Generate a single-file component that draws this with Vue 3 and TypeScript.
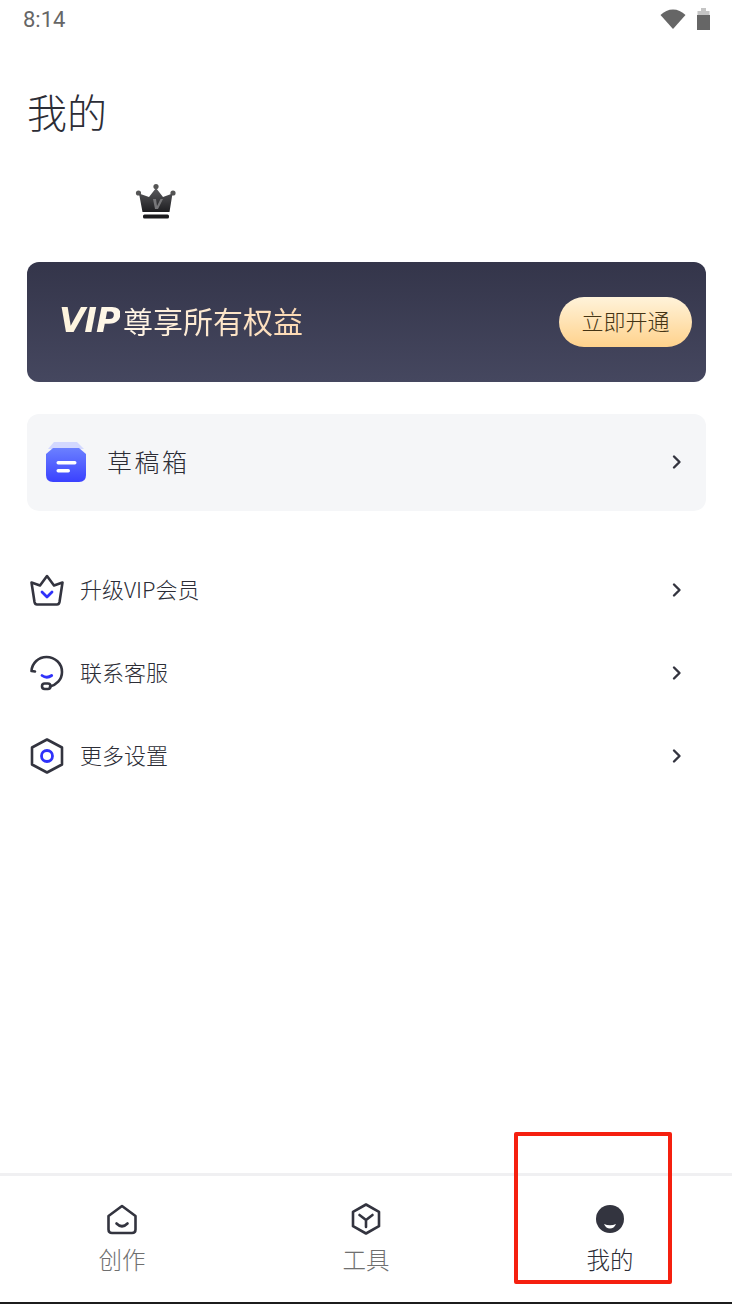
<script setup lang="ts">
const menus = [
  { key: 'vip', label: '升级VIP会员' },
  { key: 'service', label: '联系客服' },
  { key: 'setting', label: '更多设置' },
]
</script>

<template>
  <div class="page">
    <div class="status-bar">
      <span class="time">8:14</span>
      <div class="status-icons">
        <svg width="26" height="20" viewBox="0 0 26 20">
          <path d="M0.5 6C7.5 -1.5 18.5 -1.5 25.5 6L13 20Z" fill="#666" />
        </svg>
        <svg width="13" height="22" viewBox="0 0 13 22">
          <path d="M0 7h13v15H0z" fill="#666" />
          <path d="M4 0h5v3h3.500v4H.5V3h3.500z" fill="#c4c4c4" />
        </svg>
      </div>
    </div>

    <h1 class="title">我的</h1>

    <div class="user">
      <svg width="42" height="38" viewBox="0 0 42 38">
        <defs>
          <linearGradient id="crownFill" x1="0" y1="0" x2="0" y2="1">
            <stop offset="0" stop-color="#5c5c5f" />
            <stop offset="1" stop-color="#1d1d20" />
          </linearGradient>
        </defs>
        <circle cx="21" cy="3.500" r="2.600" fill="#555" />
        <circle cx="3.500" cy="10" r="2.600" fill="#555" />
        <circle cx="38" cy="10" r="2.600" fill="#555" />
        <path d="M21 5L28 14L37.500 10.500L34.500 29H7.500L4 10.500L14 14Z" fill="url(#crownFill)" />
        <path d="M18 16h3l1 7 3.500-7h2.500l-5 10h-3z" fill="#77777a" />
        <rect x="8" y="31.500" width="26" height="4" rx="1.500" fill="#1b1b1e" />
      </svg>
    </div>

    <div class="banner">
      <div class="banner-text">
        <span class="vip-logo">VIP</span>
        <span class="banner-title">尊享所有权益</span>
      </div>
      <div class="open-btn">立即开通</div>
    </div>

    <div class="draft">
      <svg width="40" height="40" viewBox="0 0 40 40">
        <defs>
          <linearGradient id="boxFill" x1="0" y1="0" x2="0" y2="1">
            <stop offset="0" stop-color="#6b80ff" />
            <stop offset="1" stop-color="#3a41ff" />
          </linearGradient>
        </defs>
        <path d="M8 0H31L38 7H2Z" fill="#d3d8ff" />
        <path d="M7 6H33L40 12V33Q40 40 33 40H7Q0 40 0 33V12Z" fill="url(#boxFill)" />
        <rect x="10.500" y="19" width="20" height="3.500" rx="1.700" fill="#fff" />
        <rect x="10.500" y="27" width="13.500" height="3.500" rx="1.700" fill="#fff" />
      </svg>
      <span class="draft-label">草稿箱</span>
      <svg class="chevron" width="12" height="16" viewBox="0 0 12 16">
        <path d="M3 2.500L8.500 8L3 13.500" />
      </svg>
    </div>

    <div class="menu">
      <div v-for="item in menus" :key="item.key" class="menu-row">
        <svg width="36" height="36" viewBox="0 0 36 36">
          <template v-if="item.key === 'vip'">
            <path class="ink" d="M18 4L25 13.500L33.500 10.500L30.500 30Q30 32.500 28 32.500H8Q6 32.500 5.500 30L2.500 10.500L11 13.500Z" />
            <path class="blue" d="M13 20L18 25L23 20" />
          </template>
          <template v-else-if="item.key === 'service'">
            <path class="ink" d="M6 16.500L2.500 16C3 8 9.500 2 17.500 2C26 2 33 8.500 33 17C33 25 27 30 21 31.500" />
            <path class="blue" d="M13 20.500Q17.700 24 22.700 20.500" />
            <rect class="ink" x="13" y="28.500" width="8.500" height="5.500" rx="2.700" />
          </template>
          <template v-else>
            <path class="ink" d="M18 1.500L33 9.500V26.500L18 34.500L3 26.500V9.500Z" />
            <circle class="blue" cx="18" cy="18" r="5.500" />
          </template>
        </svg>
        <span class="menu-label">{{ item.label }}</span>
        <svg class="chevron" width="12" height="16" viewBox="0 0 12 16">
          <path d="M3 2.500L8.500 8L3 13.500" />
        </svg>
      </div>
    </div>

    <div class="tabbar">
      <div class="tab">
        <svg width="32" height="32" viewBox="0 0 32 32">
          <path class="ink" d="M16 3L29.500 13V26.500Q29.500 30 26 30H6Q2.500 30 2.500 26.500V13Z" />
          <path class="ink" d="M10.500 20.500Q16 26 21.500 20.500" />
        </svg>
        <span class="tab-label">创作</span>
      </div>
      <div class="tab">
        <svg width="32" height="32" viewBox="0 0 32 32">
          <path class="ink" d="M16 1.500L29 8.800V23.200L16 30.500L3 23.200V8.800Z" />
          <path class="ink" d="M9.500 12L16 17L22.500 12M16 17V24" />
        </svg>
        <span class="tab-label">工具</span>
      </div>
      <div class="tab active">
        <svg width="32" height="32" viewBox="0 0 32 32">
          <circle cx="16" cy="16" r="14" fill="#33343f" />
          <path d="M10 21Q16 23.500 22 21Q20 25.500 16 25.500Q12 25.500 10 21Z" fill="#fff" />
        </svg>
        <span class="tab-label">我的</span>
      </div>
    </div>

    <div class="highlight"></div>
  </div>
</template>

<style>
html,
body {
  margin: 0;
  background: #fff;
}
</style>

<style scoped>
.page {
  position: relative;
  display: flex;
  flex-direction: column;
  width: 732px;
  height: 1304px;
  box-sizing: border-box;
  overflow: hidden;
  background: #fff;
  border-bottom: 2px solid #1c1c1c;
  font-family: 'Noto Sans CJK SC', 'Noto Sans', sans-serif;
  font-weight: 300;
  color: #2c2d36;
}

.status-bar {
  display: flex;
  align-items: center;
  justify-content: space-between;
  height: 40px;
  padding: 0 23px;
}

.time {
  margin-top: -2px;
  font-family: Roboto, sans-serif;
  font-size: 22px;
  font-weight: 400;
  color: #666;
}

.status-icons {
  display: flex;
  align-items: center;
  gap: 11px;
  margin-right: -1px;
  margin-top: -3px;
}

.title {
  margin: 45px 0 0 27px;
  height: 52px;
  font-size: 40px;
  font-weight: 300;
  line-height: 52px;
}

.user {
  display: flex;
  height: 38px;
  margin-top: 46px;
  padding-left: 135px;
}

.banner {
  display: flex;
  align-items: center;
  justify-content: space-between;
  height: 120px;
  margin: 41px 26px 0 27px;
  padding: 0 14px 0 32px;
  border-radius: 12px;
  background: linear-gradient(180deg, #34354a, #45475f);
}

.banner-text {
  display: flex;
  align-items: center;
  gap: 3px;
  padding-bottom: 4px;
}

.vip-logo {
  font-family: 'DejaVu Sans', sans-serif;
  font-size: 34px;
  font-weight: 700;
  font-style: italic;
  letter-spacing: -1px;
  background: linear-gradient(90deg, #fdf3dc, #fff8ea);
  -webkit-background-clip: text;
  background-clip: text;
  color: transparent;
}

.banner-title {
  font-size: 30px;
  font-weight: 400;
  background: linear-gradient(90deg, #fff6e8, #fcd9b2);
  -webkit-background-clip: text;
  background-clip: text;
  color: transparent;
}

.open-btn {
  width: 133px;
  height: 50px;
  box-sizing: border-box;
  border-radius: 25px;
  background: linear-gradient(180deg, #fff3da, #ffd28c);
  font-size: 22px;
  line-height: 46px;
  text-align: center;
  color: #443414;
}

.draft {
  display: flex;
  align-items: center;
  height: 97px;
  box-sizing: border-box;
  margin: 32px 26px 0 27px;
  padding: 0 23px 2px 19px;
  border-radius: 12px;
  background: #f5f6f8;
}

.draft-label {
  flex: 1;
  margin-left: 21px;
  padding-bottom: 2px;
  font-size: 25px;
  letter-spacing: 2.500px;
}

.chevron {
  flex: none;
}

.chevron path {
  fill: none;
  stroke: #33343f;
  stroke-width: 2.400;
  stroke-linecap: round;
  stroke-linejoin: round;
}

.menu {
  display: flex;
  flex-direction: column;
  margin-top: 37px;
}

.menu-row {
  display: flex;
  align-items: center;
  height: 83px;
  padding: 0 49px 0 29px;
}

.menu-label {
  flex: 1;
  margin-left: 15px;
  padding-bottom: 4px;
  font-size: 22px;
}

.ink {
  fill: none;
  stroke: #33343f;
  stroke-width: 2.600;
  stroke-linecap: round;
  stroke-linejoin: round;
}

.blue {
  fill: none;
  stroke: #2f32fa;
  stroke-width: 2.800;
  stroke-linecap: round;
  stroke-linejoin: round;
}

.tabbar {
  display: grid;
  grid-template-columns: repeat(3, 1fr);
  margin-top: auto;
  height: 129px;
  box-sizing: border-box;
  padding-top: 27px;
  border-top: 3px solid #f0f0f2;
}

.tab {
  display: flex;
  flex-direction: column;
  align-items: center;
  gap: 7px;
}

.tab-label {
  font-size: 23.500px;
  line-height: 34px;
  color: #6f6f6f;
}

.tab.active .tab-label {
  color: #2c2d36;
}

.highlight {
  position: absolute;
  left: 514px;
  top: 1132px;
  width: 158px;
  height: 152px;
  box-sizing: border-box;
  border: 4px solid #f5200f;
  border-radius: 2px;
}
</style>
